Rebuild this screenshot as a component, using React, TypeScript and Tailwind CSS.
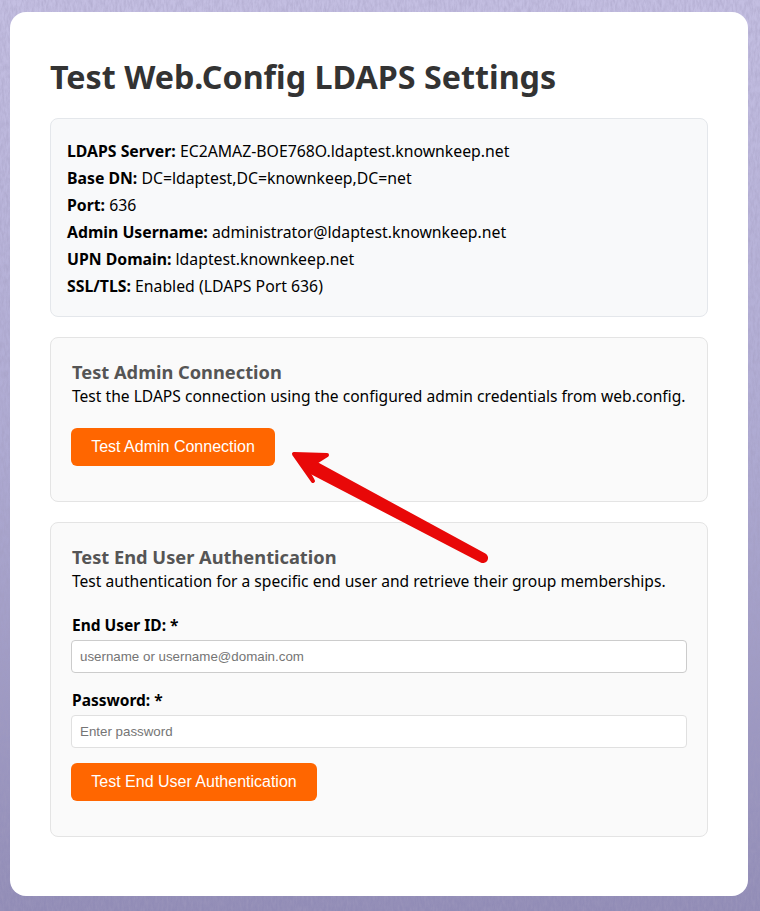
function Info({ label, value }: { label: string; value: string }) {
  return (
    <p>
      <strong className="font-bold">{label}</strong> {value}
    </p>
  );
}

function Field({ label, placeholder, dark }: { label: string; placeholder: string; dark?: boolean }) {
  return (
    <div>
      <label className="mb-1 block h-[21px] pl-px text-[15.5px] leading-[21px] font-bold text-black">{label}</label>
      <input
        placeholder={placeholder}
        className={`block h-[33px] w-full rounded-[4px] border bg-white px-2 font-['Liberation_Sans',sans-serif] text-[13.33px] placeholder:text-[#757575] ${dark ? "border-[#cccccc]" : "border-[#e0e0e0]"}`}
      />
    </div>
  );
}

const buttonClass = "h-[38px] rounded-md bg-[#ff6600] font-['Liberation_Sans',sans-serif] text-[16px] text-white";

export default function App() {
  return (
    <div className="relative h-[911px] w-[760px] overflow-hidden bg-gradient-to-b from-[#c4bfe2] via-[#aeaad2] to-[#918cb6] pt-3 pr-3 pl-2.5 font-['Noto_Sans',sans-serif] text-[#111]">
      <svg className="pointer-events-none absolute inset-0 h-full w-full opacity-50" aria-hidden="true">
        <filter id="paper">
          <feTurbulence type="fractalNoise" baseFrequency="0.45 0.14" numOctaves="3" seed="4" />
          <feColorMatrix values="0 0 0 0 0.36  0 0 0 0 0.33  0 0 0 0 0.52  0 0 0 1.6 -0.5" />
        </filter>
        <rect width="100%" height="100%" filter="url(#paper)" />
      </svg>

      <main className="relative h-[884px] rounded-[16px] bg-white p-10">
        <h1 className="mb-[22px] h-11 text-[32.25px] leading-[50px] font-bold text-[#333333]">Test Web.Config LDAPS Settings</h1>

        <section className="mb-5 rounded-lg border border-[#e4e7eb] bg-[#f8f9fa] px-4 pt-[19px] pb-4 text-[15.8px] leading-[27px] text-black">
          <Info label="LDAPS Server:" value="EC2AMAZ-BOE768O.ldaptest.knownkeep.net" />
          <Info label="Base DN:" value="DC=ldaptest,DC=knownkeep,DC=net" />
          <Info label="Port:" value="636" />
          <Info label="Admin Username:" value="administrator@ldaptest.knownkeep.net" />
          <Info label="UPN Domain:" value="ldaptest.knownkeep.net" />
          <Info label="SSL/TLS:" value="Enabled (LDAPS Port 636)" />
        </section>

        <section className="mb-5 h-[165px] rounded-lg border border-[#e4e4e4] bg-[#fafafa] px-5 pt-5">
          <h2 className="mb-px pl-px text-[18.25px] leading-[27px] font-bold text-[#555555]">Test Admin Connection</h2>
          <p className="mb-[21px] pl-px text-[15.6px] leading-[21px] text-black">Test the LDAPS connection using the configured admin credentials from web.config.</p>
          <button className={`${buttonClass} w-[204px]`}>Test Admin Connection</button>
        </section>

        <section className="h-[315px] rounded-lg border border-[#e4e4e4] bg-[#fafafa] px-5 pt-5">
          <h2 className="mb-px pl-px text-[18.25px] leading-[27px] font-bold text-[#555555]">Test End User Authentication</h2>
          <p className="mb-[23px] pl-px text-[15.6px] leading-[21px] text-black">Test authentication for a specific end user and retrieve their group memberships.</p>
          <div className="mb-[15px] flex flex-col gap-[17px]">
            <Field label="End User ID: *" placeholder="username or username@domain.com" dark />
            <Field label="Password: *" placeholder="Enter password" />
          </div>
          <button className={`${buttonClass} w-[246px]`}>Test End User Authentication</button>
        </section>
      </main>

      {/* red annotation arrow */}
      <svg className="pointer-events-none absolute top-[440px] left-[280px] h-[130px] w-[220px]" viewBox="0 0 220 130" fill="#e80808" aria-hidden="true">
        <path d="M35.4 20.9 L205.4 113.6 A5 5 0 0 1 200.6 122.4 L28.6 33.1 Z" />
        <path d="M14 14 L47 15 L36 22 L28 32 L33 41 Z" stroke="#e80808" strokeWidth="4" strokeLinejoin="round" />
      </svg>
    </div>
  );
}
